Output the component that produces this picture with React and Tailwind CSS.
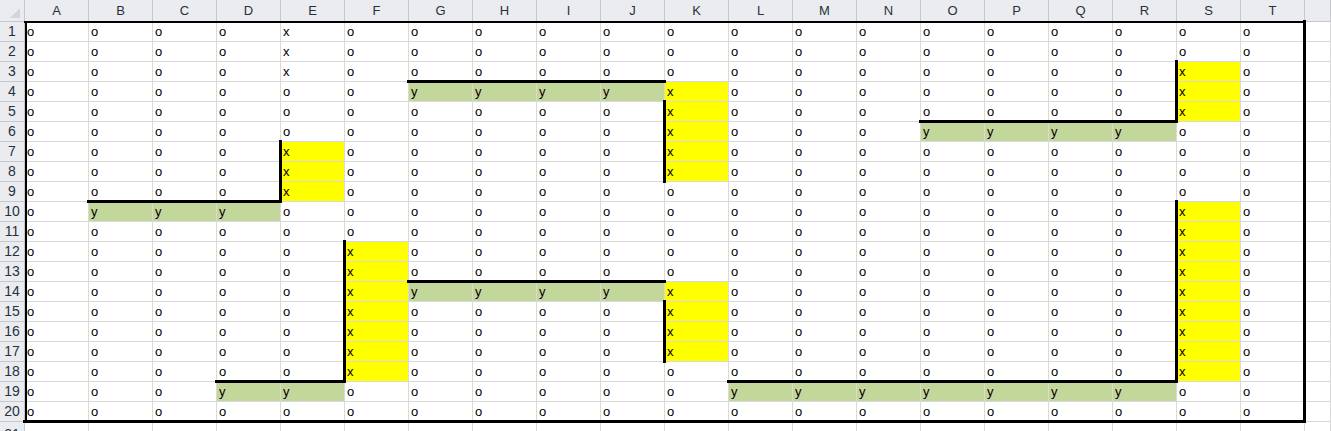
import { Fragment } from 'react';

const cols = 'ABCDEFGHIJKLMNOPQRST'.split('');

const rows = [
  'ooooxooooooooooooooo',
  'ooooxooooooooooooooo',
  'ooooxoooooooooooooxo',
  'ooooooyyyyxoooooooxo',
  'ooooooooooxoooooooxo',
  'ooooooooooxoooyyyyoo',
  'ooooxoooooxooooooooo',
  'ooooxoooooxooooooooo',
  'ooooxooooooooooooooo',
  'oyyyooooooooooooooxo',
  'ooooooooooooooooooxo',
  'oooooxooooooooooooxo',
  'oooooxooooooooooooxo',
  'oooooxyyyyxoooooooxo',
  'oooooxooooxoooooooxo',
  'oooooxooooxoooooooxo',
  'oooooxooooxoooooooxo',
  'oooooxooooooooooooxo',
  'oooyyooooooyyyyyyyoo',
  'oooooooooooooooooooo',
];

// thick borders per cell
const edges = {};
const add = (r, c, e) => {
  const k = r + '-' + c;
  edges[k] = (edges[k] || '') + e;
};
const hTop = (r, c1, c2) => { for (let c = c1; c <= c2; c++) add(r, c, 't'); };
const vLeft = (c, r1, r2) => { for (let r = r1; r <= r2; r++) add(r, c, 'l'); };

hTop(3, 6, 9); vLeft(10, 4, 7);
vLeft(4, 6, 8); hTop(9, 1, 3);
vLeft(18, 2, 4); hTop(5, 14, 17);
vLeft(5, 11, 17); hTop(18, 3, 4);
hTop(13, 6, 9); vLeft(10, 14, 16);
vLeft(18, 9, 17); hTop(18, 11, 17);
for (let r = 0; r < 20; r++) { add(r, 0, 'L'); add(r, 19, 'r'); }
for (let c = 0; c < 20; c++) { add(0, c, 'T'); add(19, c, 'b'); }

function Cell({ v, r, c }) {
  const e = edges[r + '-' + c] || '';
  const fill =
    v === 'y' ? 'bg-[#c4d79b]' : v === 'x' && !(c === 4 && r < 3) ? 'bg-[#ffff00]' : 'bg-white';
  return (
    <div className={`relative border-r border-b border-[#d9d9d9] pl-[2px] leading-[19px] ${fill}`}>
      {v}
      {e.includes('t') && <span className="absolute -top-[2px] -left-[2px] -right-[2px] h-[3px] bg-black z-10" />}
      {e.includes('l') && <span className="absolute -left-[2px] -top-[2px] -bottom-[2px] w-[3px] bg-black z-10" />}
      {e.includes('r') && <span className="absolute -right-[2px] -top-[2px] -bottom-[2px] w-[3px] bg-black z-10" />}
      {e.includes('b') && <span className="absolute -bottom-[2px] -left-[2px] -right-[2px] h-[3px] bg-black z-10" />}
      {e.includes('L') && <span className="absolute left-0 -top-[1px] -bottom-[1px] w-[2px] bg-black z-10" />}
      {e.includes('T') && <span className="absolute -top-[1px] -left-[1px] -right-[1px] h-[2px] bg-black z-10" />}
    </div>
  );
}

const head = 'bg-[#eaecef] border-r border-b border-[#c6c8cc] text-[#27313d] flex items-center justify-center';

export default function App() {
  return (
    <div className="w-[1331px] h-[431px] overflow-hidden bg-white font-['Liberation_Sans',Arial,sans-serif] text-[13px] text-black">
      <div className="grid grid-cols-[25px_repeat(20,64px)_26px] grid-rows-[22px_repeat(21,20px)]">
        <div className={`${head} relative`}>
          <svg width="24" height="21" viewBox="0 0 24 21" className="absolute inset-0">
            <polygon points="10,18 20,18 20,8" fill="#d3d5d9" />
          </svg>
        </div>
        {cols.map((c) => (
          <div key={c} className={head}>{c}</div>
        ))}
        <div className={head} />

        {rows.map((row, r) => (
          <Fragment key={r}>
            <div className={`${head} text-[14px]`}>{r + 1}</div>
            {row.split('').map((v, c) => (
              <Cell key={c} v={v} r={r} c={c} />
            ))}
            <div className="border-r border-b border-[#d9d9d9]" />
          </Fragment>
        ))}

        <div className={`${head} text-[14px] items-start pt-[2px]`}>21</div>
        {cols.map((c) => (
          <div key={'e' + c} className="border-r border-b border-[#d9d9d9]" />
        ))}
        <div className="border-r border-b border-[#d9d9d9]" />
      </div>
    </div>
  );
}
